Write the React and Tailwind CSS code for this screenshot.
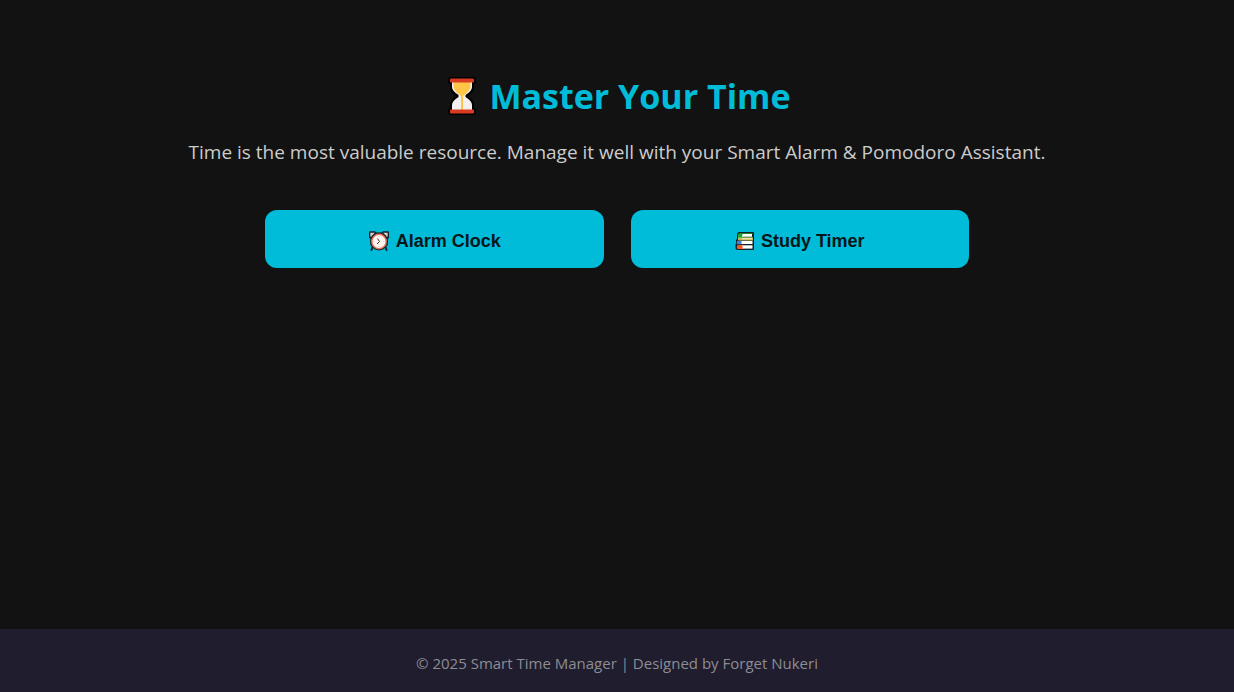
function HourglassIcon() {
  return (
    <svg viewBox="0 0 30 40" className="h-10 w-[30px] shrink-0" aria-hidden="true">
      <path
        d="M3 1h24q2 0 2 2v3q0 2-2 2.500v3q0 4-5.500 8.500q5.500 4.500 5.500 8.500v3q2 .5 2 2.500v3q0 2-2 2H3q-2 0-2-2v-3q0-2 2-2.500v-3q0-4 5.500-8.500Q3 15.500 3 11.500v-3Q1 8 1 6V3q0-2 2-2z"
        fill="#000"
      />
      <path d="M5 6h20v5q0 4-6.500 8v2q6.500 4 6.500 8v6H5v-6q0-4 6.500-8v-2Q5 15 5 11z" fill="#f3efee" />
      <path d="M6.500 6h17v4q0 4-5 8L16 20v14h-2V20l-2.500-2Q6.500 14 6.500 10z" fill="#ffc546" />
      <rect x="3" y="2.500" width="24" height="4" rx="1" fill="#d93a20" />
      <rect x="3" y="33.500" width="24" height="4" rx="1" fill="#d93a20" />
    </svg>
  );
}

function AlarmClockIcon() {
  return (
    <svg viewBox="0 0 22 22" className="size-[22px] shrink-0" aria-hidden="true">
      <path d="M4.500 17l-1 3M17.500 17l1 3" stroke="#14232a" strokeWidth="2" strokeLinecap="round" />
      <path d="M1 2.500q0-1.200 1-1.200h5l1.500 1.200h5L15 1.300h5q1 0 1 1.200v5l-1.500 2v6H2.500V9.500L1 7.500z" fill="#14232a" />
      <path d="M2.300 2.700h4.500L3.200 7l-.9-.8zM19.700 2.700h-4.500L18.800 7l.9-.8z" fill="#d6cdd3" />
      <circle cx="11" cy="11.500" r="9" fill="#14232a" />
      <circle cx="11" cy="11.500" r="7.200" fill="#fff4f0" stroke="#e6735f" strokeWidth="1.400" />
      <path d="M9.500 8.500l2 3-2.500 2.500" fill="none" stroke="#3a3034" strokeWidth="1" />
      <path d="M11 6v1M11 16v1M5.500 11.500h1M15.500 11.500h1" stroke="#d9c9c8" strokeWidth="1" />
    </svg>
  );
}

function BooksIcon() {
  return (
    <svg viewBox="0 0 20 20" className="size-5 shrink-0" aria-hidden="true">
      <path d="M4 1h14q1 0 1 1v16q0 1-1 1H2.500Q.5 19 .5 17v-3q0-1 1-2l-.5-1V9l1-1V3.500Q2 1 4 1z" fill="#14232a" />
      <path d="M4.500 2.300h13v1H8v3h9.500v.7H3V4q0-1.700 1.500-1.700z" fill="#20a82c" />
      <path d="M7.500 3H17v2.700H7z" fill="#fff" />
      <path d="M3 6.500h15v3H4.500Q3 9.500 3 8.500z" fill="#c9b657" />
      <path d="M7 7.300h10v1H7z" fill="#fff6d2" />
      <path d="M2 9.800h5.500v3.500H2z" fill="#4380d4" />
      <path d="M6.500 10H17.500v3H6.500z" fill="#fff" />
      <path d="M3.500 14H8v4H3q-1.200 0-1.200-2t1.700-2z" fill="#f35b24" />
      <path d="M7.500 14.300h10v3.300h-10z" fill="#fff" />
    </svg>
  );
}

function ActionButton({ icon, children }) {
  return (
    <button
      type="button"
      className="flex h-[58px] flex-1 cursor-pointer items-center justify-center gap-1.5 rounded-xl bg-[#00bcd8] pt-1 font-['Liberation_Sans',sans-serif] text-lg font-bold text-[#07161a] hover:bg-[#00acc6]"
    >
      {icon}
      {children}
    </button>
  );
}

export default function App() {
  return (
    <div className="flex min-h-screen flex-col bg-[#121212] font-['Open_Sans',sans-serif]">
      <main className="flex flex-1 flex-col items-center px-4 pt-[72px]">
        <h1 className="flex items-center gap-3 pl-1 text-[34px] leading-[48px] font-bold text-[#00bcd8]">
          <HourglassIcon />
          Master Your Time
        </h1>
        <p className="mt-4 text-center text-[19px] leading-8 text-[#cccccc]">
          Time is the most valuable resource. Manage it well with your Smart Alarm &amp; Pomodoro Assistant.
        </p>
        <div className="mt-[42px] flex w-full max-w-[704px] gap-[27px]">
          <ActionButton icon={<AlarmClockIcon />}>Alarm Clock</ActionButton>
          <ActionButton icon={<BooksIcon />}>Study Timer</ActionButton>
        </div>
      </main>
      <footer className="bg-[#1f1d2e] px-4 pt-[22px] pb-[17px] text-center text-[15px] leading-6 text-[#8d8c93]">
        © 2025 Smart Time Manager | Designed by Forget Nukeri
      </footer>
    </div>
  );
}
